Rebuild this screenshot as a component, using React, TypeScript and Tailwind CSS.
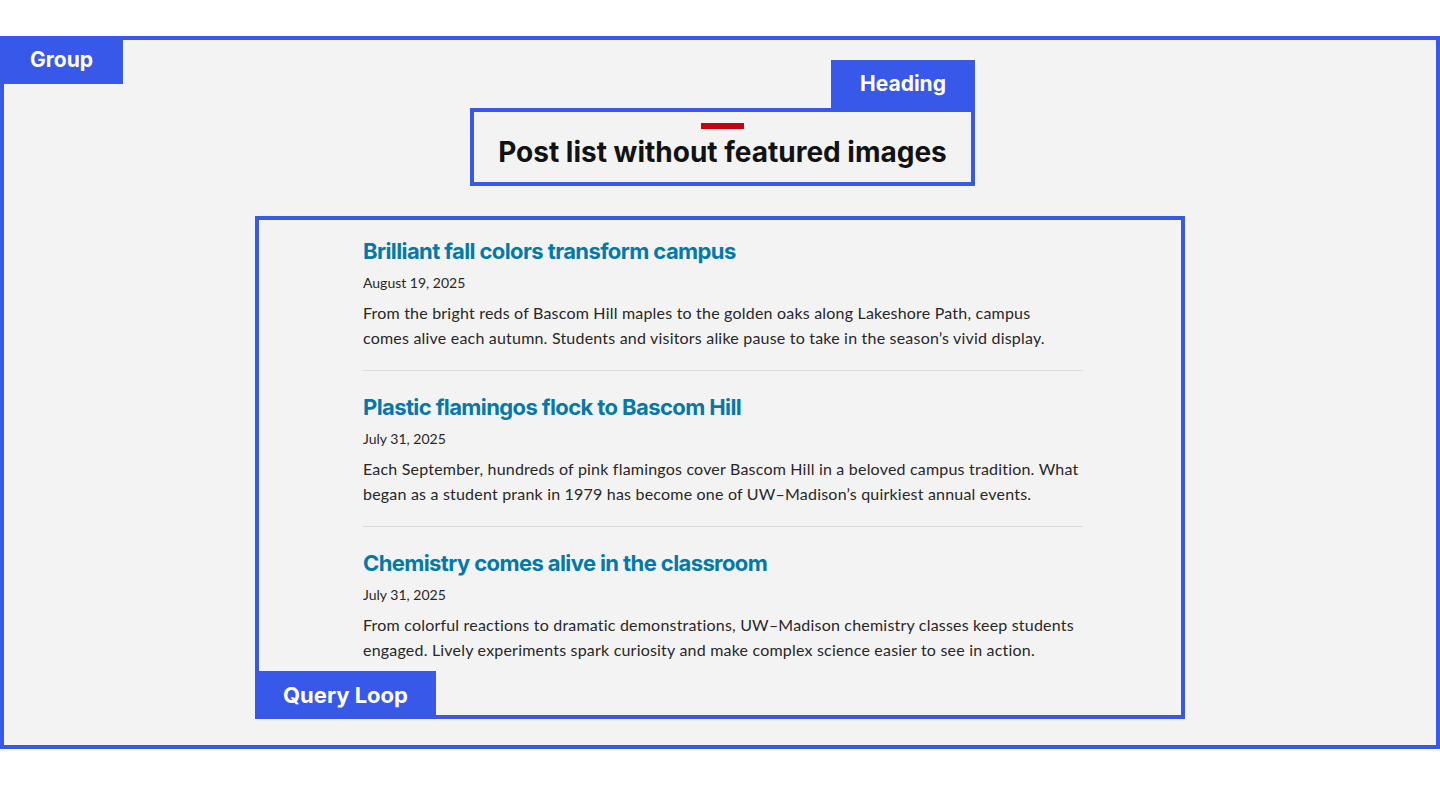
const display = "font-['Inter','Liberation_Sans',sans-serif]";
const text = "font-['Lato','Noto_Sans',sans-serif]";

const posts = [
  {
    title: "Brilliant fall colors transform campus",
    date: "August 19, 2025",
    excerpt:
      "From the bright reds of Bascom Hill maples to the golden oaks along Lakeshore Path, campus comes alive each autumn. Students and visitors alike pause to take in the season\u2019s vivid display.",
  },
  {
    title: "Plastic flamingos flock to Bascom Hill",
    date: "July 31, 2025",
    excerpt:
      "Each September, hundreds of pink flamingos cover Bascom Hill in a beloved campus tradition. What began as a student prank in 1979 has become one of UW\u2013Madison\u2019s quirkiest annual events.",
  },
  {
    title: "Chemistry comes alive in the classroom",
    date: "July 31, 2025",
    excerpt:
      "From colorful reactions to dramatic demonstrations, UW\u2013Madison chemistry classes keep students engaged. Lively experiments spark curiosity and make complex science easier to see in action.",
  },
];

// block name tag that sits over the outline of its block
function Label({ children, className }: { children: string; className?: string }) {
  return (
    <div className={`absolute flex items-center justify-center bg-[#3858e9] text-white font-bold ${display} ${className ?? ""}`}>
      {children}
    </div>
  );
}

export default function App() {
  return (
    <div className="w-[1440px] h-[800px] bg-white pt-[36px]">
      <div className="relative h-[713px] border-4 border-[#3858e9] bg-[#f3f3f3] flex flex-col items-center pt-[68px] gap-[30px]">
        <Label className="left-[-4px] top-[-4px] w-[123px] h-[48px] text-[21px]">Group</Label>

        <div className="relative ml-[5px] w-[505px] h-[78px] border-4 border-[#3858e9] flex flex-col items-center pt-[11px] gap-[6px]">
          <Label className="right-[-4px] top-[-52px] w-[144px] h-[48px] text-[21px]">Heading</Label>
          <div className="w-[43px] h-[6px] bg-[#c5050c]" />
          <h2 className={`text-[28px] leading-[34px] font-bold text-[#121212] ${display}`}>
            Post list without featured images
          </h2>
        </div>

        <div className="relative w-[930px] h-[503px] border-4 border-[#3858e9] pl-[104px]">
          <Label className="left-[-4px] bottom-[-4px] w-[181px] h-[48px] text-[22px]">Query Loop</Label>
          <ul className="w-[720px] flex flex-col">
            {posts.map((p, i) => (
              <li
                key={p.title}
                className={`flex flex-col ${i === 0 ? "pt-[17px]" : "pt-[22px]"} ${i < posts.length - 1 ? "pb-[20px] border-b border-[#dcdcdc]" : ""}`}
              >
                <a className={`text-[22px] leading-[28px] font-bold text-[#0479a8] tracking-[-0.6px] ${display}`}>{p.title}</a>
                <div className={`mt-[8px] text-[14px] leading-[20px] text-[#282728] ${text}`}>{p.date}</div>
                <p className={`mt-[7px] w-[716px] text-[16px] leading-[25px] text-[#282728] tracking-[0.2px] ${text}`}>{p.excerpt}</p>
              </li>
            ))}
          </ul>
        </div>
      </div>
    </div>
  );
}
